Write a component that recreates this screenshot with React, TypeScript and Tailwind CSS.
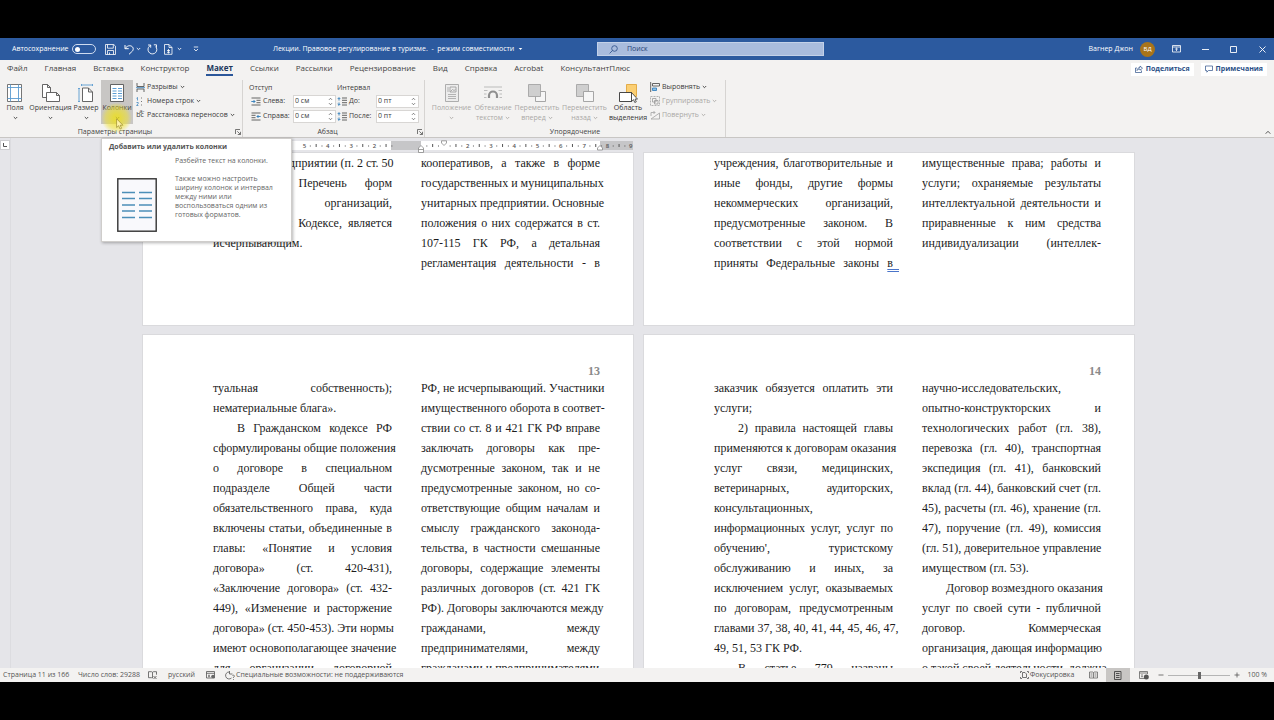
import React from "react";

type Kids = { children?: React.ReactNode };

function Svg({ w, h, children, className = "" }: Kids & { w: number; h: number; className?: string }) {
  return (
    <svg width={w} height={h} viewBox={`0 0 ${w} ${h}`} fill="none" className={`shrink-0 ${className}`} aria-hidden="true">
      {children}
    </svg>
  );
}

function Chevron() {
  return (
    <Svg w={5} h={4}>
      <path d="M.8 1l1.7 1.7L4.2 1" stroke="currentColor" strokeWidth=".9" />
    </Svg>
  );
}

/* ---------- Title bar ---------- */

function TitleBar() {
  return (
    <header className="flex h-[22px] shrink-0 items-center bg-[#2c5a9f] text-[7px] text-white">
      <div className="flex w-[273px] shrink-0 items-center pl-3">
        <label htmlFor="autosave" className="w-[60px]">Автосохранение</label>
        <button id="autosave" role="switch" aria-checked="false" aria-label="Автосохранение" className="flex h-[10px] w-6 items-center rounded-full border border-[#cfdcf0] px-[2px]">
          <span className="h-[5px] w-[5px] rounded-full bg-white" />
        </button>
        <button aria-label="Сохранить" className="ml-[9px]">
          <Svg w={11} h={11}>
            <path d="M.5.5h8.3l1.7 1.7v8.3H.5zM2.5.5v3.7h5.8V.5M2.5 10.500V6.500h6v4M4.500 8.500v2" stroke="#fff" strokeWidth=".8" />
          </Svg>
        </button>
        <button aria-label="Отменить" className="ml-2 flex items-center gap-[2px]">
          <Svg w={10} h={11}>
            <path d="M1 1v3.700h3.700M1.200 4.500C3 1.700 6 1 8 2.500s1.300 4-.3 5.300L5 10.300" stroke="#fff" strokeWidth="1" />
          </Svg>
          <Chevron />
        </button>
        <button aria-label="Повторить" className="ml-[6px]">
          <Svg w={11} h={11}>
            <path d="M6.800.8h2.700v2.700M1 1h2.700v2.700M3.500 1.500C1.600 2.400.7 4.300 1.100 6.400c.5 2.200 2.400 3.700 4.700 3.500 2.200-.2 4-2 4-4.300 0-1.200-.4-2.200-1.200-3" stroke="#fff" strokeWidth=".9" />
          </Svg>
        </button>
        <button aria-label="Создать" className="ml-[6px] flex items-center gap-1">
          <Svg w={9} h={11}>
            <path d="M.500.500h4.500L8 3.500v6.800H.500zM5 .500v3h3" stroke="#fff" strokeWidth=".8" />
            <path d="M3 6.500h3M3 8.300h3M4.500 5v4.500" stroke="#fff" strokeWidth=".8" />
          </Svg>
          <Chevron />
        </button>
        <button aria-label="Настройка панели" className="ml-[11px]">
          <Svg w={6} h={6}>
            <path d="M.8 1h4.400M1 3l2 2 2-2" stroke="#fff" strokeWidth=".8" />
          </Svg>
        </button>
      </div>
      <button className="flex w-[251px] items-center">
        <span className="whitespace-pre">Лекции. Правовое регулирование в туризме.  -  режим совместимости</span>
        <Svg w={5} h={4} className="ml-1"><path d="M.7 1h3.600L2.500 3z" fill="#fff" /></Svg>
      </button>
      <div className="flex flex-1 items-center pl-[73px]">
        <div className="flex h-[14px] w-[227px] items-center border border-[#c3d1e8] bg-[#a9bcdd] pl-[11px] text-[#1f3f75]">
          <Svg w={9} h={9}>
            <circle cx="5.500" cy="3.500" r="2.800" stroke="#2a4d86" strokeWidth=".8" />
            <path d="M3.500 5.500L.6 8.400" stroke="#2a4d86" strokeWidth=".8" />
          </Svg>
          <input aria-label="Поиск" placeholder="Поиск" className="ml-[9px] w-full bg-transparent outline-none placeholder:text-[#1f3f75]" />
        </div>
        <div className="ml-auto flex items-center whitespace-nowrap">
          <span>Вагнер Джон</span>
          <span className="ml-[7px] flex h-[15px] w-[15px] items-center justify-center rounded-full bg-[#a8741a] text-[6px]">ВД</span>
          <button aria-label="Параметры ленты" className="ml-[17px]">
            <Svg w={9} h={8}>
              <path d="M.5.5h8v6.500h-8zM.5 2h8M4.500 6V3.300M3.200 4.300l1.300-1.200 1.300 1.200" stroke="#fff" strokeWidth=".8" />
            </Svg>
          </button>
          <button aria-label="Свернуть" className="ml-[21px]">
            <Svg w={7} h={7}><path d="M0 3.500h7" stroke="#fff" strokeWidth=".9" /></Svg>
          </button>
          <button aria-label="Развернуть" className="ml-[21px]">
            <Svg w={7} h={7}><path d="M.5.5h6v6h-6z" stroke="#fff" strokeWidth=".9" /></Svg>
          </button>
          <button aria-label="Закрыть" className="mr-2 ml-[22px]">
            <Svg w={7} h={7}><path d="M.5.5l6 6M6.500.5l-6 6" stroke="#fff" strokeWidth=".9" /></Svg>
          </button>
        </div>
      </div>
    </header>
  );
}

/* ---------- Tabs ---------- */

const tabs = ["Файл", "Главная", "Вставка", "Конструктор", "Макет", "Ссылки", "Рассылки", "Рецензирование", "Вид", "Справка", "Acrobat", "КонсультантПлюс"];

function Tabs() {
  return (
    <nav className="flex h-[18px] shrink-0 items-center gap-[17px] px-[7px] text-[8px] text-[#444]">
      {tabs.map((t) => (
        <a key={t} href="#" className={t === "Макет" ? "border-b-2 border-[#2b579a] leading-3 font-bold text-[#20365a]" : "border-b-2 border-transparent leading-3"}>
          {t}
        </a>
      ))}
      <div className="ml-auto flex items-center gap-[7px] text-[7px] font-bold text-[#2b4f86]">
        <button className="flex h-[13px] items-center gap-[3px] bg-white px-1">
          <Svg w={8} h={8}>
            <path d="M2 3H.5v4.500h6V5.500M2 5.500C2.300 3.500 3.500 2.500 5 2.500V1l2.500 2.200L5 5.200V4C3.700 4 2.700 4.500 2 5.500z" stroke="#2b4f86" strokeWidth=".7" />
          </Svg>
          Поделиться
        </button>
        <button className="flex h-[13px] items-center gap-[3px] bg-white px-1">
          <Svg w={8} h={8}><path d="M.5 1h7v4.500H3.500L1.800 7.200V5.500H.5z" stroke="#2b4f86" strokeWidth=".7" /></Svg>
          Примечания
        </button>
      </div>
    </nav>
  );
}

/* ---------- Ribbon ---------- */

function Launcher() {
  return (
    <button aria-label="Дополнительные параметры" className="absolute right-[1px] bottom-[2px]">
      <Svg w={6} h={6}><path d="M.5 5V.5H5M2.300 2.300l3 3M5.500 2.800v2.700H2.800" stroke="#555" strokeWidth=".8" /></Svg>
    </button>
  );
}

function Group({ title, launcher, className, children }: Kids & { title: string; launcher?: boolean; className: string }) {
  return (
    <section className={`relative flex flex-col ${className}`}>
      <div className="flex flex-1 items-start">{children}</div>
      <h2 className={`pb-[1px] text-center text-[7px] leading-[9px] text-[#444] ${launcher ? "pr-3" : ""}`}>{title}</h2>
      {launcher && <Launcher />}
    </section>
  );
}

function BigButton({ lines, icon, arrow, className = "", children }: Kids & { lines: string[]; icon: React.ReactNode; arrow?: boolean; className?: string }) {
  const last = lines.length - 1;
  return (
    <button className={`relative flex h-[44px] shrink-0 flex-col items-center pt-[3px] text-[7px] leading-[10px] whitespace-nowrap ${className}`}>
      <span className="flex h-5 items-center">{icon}</span>
      {lines.map((l, i) => (
        <span key={l} className="flex items-center gap-[2px]">
          {l}
          {arrow && i === last && last > 0 && <Chevron />}
        </span>
      ))}
      {arrow && last === 0 && <span className="flex h-[10px] items-center"><Chevron /></span>}
      {children}
    </button>
  );
}

function SmallButton({ icon, disabled, children }: Kids & { icon: React.ReactNode; disabled?: boolean }) {
  return (
    <button className={`flex h-[14px] items-center text-[7px] whitespace-nowrap ${disabled ? "text-[#aaa8a6]" : "text-[#3b3b3b]"}`}>
      <span className="mr-[2px] flex w-[10px] justify-center">{icon}</span>
      {children}
      <span className="ml-[2px]"><Chevron /></span>
    </button>
  );
}

function Field({ id, label, value, icon, labelWidth }: { id: string; label: string; value: string; icon: React.ReactNode; labelWidth: string }) {
  return (
    <div className="flex h-[15px] items-center text-[7px] text-[#3b3b3b]">
      {icon}
      <label htmlFor={id} className={`ml-[2px] ${labelWidth}`}>{label}</label>
      <div className="flex h-[13px] w-[43px] items-center border border-[#d8d6d4] bg-white pr-[2px]">
        <input id={id} defaultValue={value} className="w-full min-w-0 bg-transparent pl-[1px] outline-none" />
        <Svg w={5} h={9}><path d="M1 2.800l1.500-1.500L4 2.800M1 6.200l1.500 1.500L4 6.200" stroke="#555" strokeWidth=".8" /></Svg>
      </div>
    </div>
  );
}

function IndentIcon({ flip }: { flip?: boolean }) {
  return (
    <Svg w={10} h={9}>
      <path d={flip ? "M.5 1h9M.5 3.300h4M.5 5.700h4M.5 8h9" : "M.5 1h9M5.500 3.300h4M5.500 5.700h4M.5 8h9"} stroke="#555" strokeWidth=".9" />
      <path d={flip ? "M9.700 4.500H6M7.500 3L6 4.500 7.500 6" : "M.3 4.500h3.700M2.500 3L4 4.500 2.500 6"} stroke="#2a79b8" strokeWidth=".9" />
    </Svg>
  );
}

function SpacingIcon() {
  return (
    <Svg w={10} h={9}>
      <path d="M5 1h5M5 3.300h5M5 5.700h5M5 8h5" stroke="#555" strokeWidth=".9" />
      <path d="M2 .8v2.700M.7 2L2 .7 3.300 2M2 8.200V5.500M.7 7L2 8.300 3.300 7" stroke="#2a79b8" strokeWidth=".9" />
    </Svg>
  );
}

function ColumnsTooltip() {
  return (
    <div role="tooltip" className="absolute top-[58px] left-0 z-20 w-[191px] border border-[#cfcdcb] bg-white px-[7px] pt-[3px] pb-[9px] text-left text-[7px] leading-[9px] whitespace-normal text-[#666] shadow-[1px_1px_3px_rgba(0,0,0,0.3)]">
      <strong className="block leading-[10px] text-[#555]">Добавить или удалить колонки</strong>
      <div className="mt-1 flex">
        <Svg w={40} h={54} className="mt-[22px] ml-2">
          <rect x=".8" y=".8" width="38.400" height="52.400" fill="#f9f9fc" stroke="#333" strokeWidth="1.400" />
          <path d="M5 14.500h13M22 14.500h13M5 20.500h13M22 20.500h13M5 27h13M22 27h13M5 33h13M22 33h13M5 39.500h13M22 39.500h13" stroke="#4c8fb8" strokeWidth="1.400" />
        </Svg>
        <div className="ml-[18px] flex-1">
          <p>Разбейте текст на колонки.</p>
          <p className="mt-[9px] whitespace-nowrap">
            Также можно настроить<br />ширину колонок и интервал<br />между ними или<br />воспользоваться одним из<br />готовых форматов.
          </p>
        </div>
      </div>
    </div>
  );
}

function Ribbon() {
  const grey = "text-[#aaa8a6]";
  return (
    <div className="relative flex h-[60px] shrink-0 border-b border-[#c8c6c4] pt-[2px] text-[#3b3b3b]">
      <Group title="Параметры страницы" launcher className="w-[243px] border-r border-[#d6d4d2]">
        <BigButton lines={["Поля"]} arrow className="w-[30px]" icon={
          <Svg w={16} h={18}>
            <path d="M.5.5h14v17H.5z" fill="#fff" stroke="#666" strokeWidth=".9" />
            <path d="M3.500.5v17M11.500.5v17M.5 3.500h14M.5 14.500h14" stroke="#5a9bd0" strokeWidth=".9" />
          </Svg>} />
        <BigButton lines={["Ориентация"]} arrow className="w-[41px]" icon={
          <Svg w={18} h={18}>
            <path d="M.5.5h5l3 3v10h-8zM5.500.5v3h3" fill="#fff" stroke="#555" strokeWidth=".9" />
            <path d="M4.500 8.500h10l3 3v6h-13zM14.500 8.500v3h3" fill="#fff" stroke="#555" strokeWidth=".9" />
          </Svg>} />
        <BigButton lines={["Размер"]} arrow className="w-[30px]" icon={
          <Svg w={16} h={18}>
            <path d="M3.500 1h11M1 4.500v13M3.500 0v2M14.500 0v2M0 4.500h2M0 17.500h2" stroke="#5a9bd0" strokeWidth=".9" />
            <path d="M4.500 4h6l4 4v9.500h-10zM10.500 4v4h4" fill="#fff" stroke="#555" strokeWidth=".9" />
          </Svg>} />
        <div className="relative">
          <BigButton lines={["Колонки"]} arrow className="w-8 bg-[#c8c6c4]" icon={
            <Svg w={15} h={18}>
              <path d="M.5.5h13v17H.5z" fill="#fff" stroke="#555" strokeWidth=".9" />
              <path d="M2.500 4.500h4M8 4.500h4M2.500 7h4M8 7h4M2.500 9.500h4M8 9.500h4M2.500 12h4M8 12h4M2.500 14.500h4M8 14.500h4" stroke="#4a93cf" strokeWidth=".9" />
            </Svg>}>
            <span className="pointer-events-none absolute top-[23px] left-0 h-[30px] w-[31px] rounded-full bg-[radial-gradient(circle,rgba(240,225,20,0.75)_15%,rgba(240,225,40,0.5)_50%,rgba(240,225,60,0)_72%)]" />
            <Svg w={8} h={12} className="absolute top-[38px] left-[15px] z-30">
              <path d="M.6.8v8.700l2-1.800 1.500 3.300 1.500-.7-1.500-3.100h2.800z" fill="#fff3a8" stroke="#8a7a20" strokeWidth=".6" />
            </Svg>
          </BigButton>
          <ColumnsTooltip />
        </div>
        <div className="ml-[2px]">
          <SmallButton icon={<Svg w={9} h={9}><path d="M1 0v3.500h7V0M1 9V6h7v3" stroke="#555" strokeWidth=".9" /><path d="M0 4.700h9" stroke="#2a79b8" strokeWidth=".8" /></Svg>}>Разрывы</SmallButton>
          <SmallButton icon={<Svg w={9} h={9}><path d="M.5 1.300L1.500.5v3M.5 5.500h1.700v1L.6 8.500h1.800" stroke="#2a79b8" strokeWidth=".7" /><path d="M5 1h1M5 4.500h1M5 8h1" stroke="#777" strokeWidth="1" /></Svg>}>Номера строк</SmallButton>
          <SmallButton icon={
            <span className="relative text-[7px] leading-[10px]">
              bc
              <span className="absolute -top-[4px] left-[3px] text-[6px]">a-</span>
            </span>}>Расстановка переносов</SmallButton>
        </div>
      </Group>

      <Group title="Абзац" launcher className="w-[182px] border-r border-[#d6d4d2]">
        <div className="ml-2 w-[86px] pt-[1px]">
          <div className="-ml-[2px] text-[7px] leading-[13px]">Отступ</div>
          <Field id="left" label="Слева:" value="0 см" icon={<IndentIcon />} labelWidth="w-[30px]" />
          <Field id="right" label="Справа:" value="0 см" icon={<IndentIcon flip />} labelWidth="w-[30px]" />
        </div>
        <div className="pt-[1px]">
          <div className="text-[7px] leading-[13px]">Интервал</div>
          <Field id="before" label="До:" value="0 пт" icon={<SpacingIcon />} labelWidth="w-[27px]" />
          <Field id="after" label="После:" value="0 пт" icon={<SpacingIcon />} labelWidth="w-[27px]" />
        </div>
      </Group>

      <Group title="Упорядочение" className="w-[301px] border-r border-[#d6d4d2]">
        <BigButton lines={["Положение"]} arrow className={`ml-[5px] w-[43px] ${grey}`} icon={
          <Svg w={14} h={18}>
            <path d="M.5.5h13v17H.5z" fill="#ececec" stroke="#a5a5a5" strokeWidth=".9" />
            <path d="M5 3h6v5H5zM5.500 7.500l2-2 1.500 1 1.500-1" stroke="#999" strokeWidth=".8" />
            <path d="M3 3v5M3 10.500h8M3 12.500h8M3 14.500h8" stroke="#a5a5a5" strokeWidth=".8" />
          </Svg>} />
        <BigButton lines={["Обтекание", "текстом"]} arrow className={`w-[40px] ${grey}`} icon={
          <Svg w={18} h={14}>
            <path d="M0 1h18M0 4.500h3.500M14.500 4.500H18M0 8h2.500M15.500 8H18M0 11.500h2.500M15.500 11.500H18" stroke="#b5b5b5" strokeWidth=".9" />
            <path d="M5 12V9.500a4 4 0 018 0V12" stroke="#8f8f8f" strokeWidth="2.200" />
          </Svg>} />
        <BigButton lines={["Переместить", "вперед"]} arrow className={`w-[48px] ${grey}`} icon={
          <Svg w={18} h={18}>
            <path d="M7.500 7.500h10v10h-10z" fill="#f6f6f6" stroke="#9d9d9d" strokeWidth=".9" />
            <path d="M.5.5h12v12H.5z" fill="#cfcfcf" stroke="#a5a5a5" strokeWidth=".9" />
          </Svg>} />
        <BigButton lines={["Переместить", "назад"]} arrow className={`w-[47px] ${grey}`} icon={
          <Svg w={18} h={18}>
            <path d="M.5.5h12v12H.5z" fill="#cfcfcf" stroke="#a5a5a5" strokeWidth=".9" />
            <path d="M7.500 7.500h10v10h-10z" fill="#f6f6f6" stroke="#9d9d9d" strokeWidth=".9" />
          </Svg>} />
        <BigButton lines={["Область", "выделения"]} className="w-[40px] text-[#333]" icon={
          <Svg w={19} h={19}>
            <path d="M7.500.5h10v12h-10z" fill="#fbcf73" stroke="#e0a63d" strokeWidth=".9" />
            <path d="M.5 8.500h12v9H.5z" fill="#fff" stroke="#333" strokeWidth=".9" />
            <path d="M12.500 8.500v9l2-1.800 1.300 2.800 1.500-.7-1.300-2.700h2.500z" fill="#fff" stroke="#333" strokeWidth=".8" />
          </Svg>} />
        <div className="ml-[2px]">
          <SmallButton icon={<Svg w={10} h={10}><path d="M.7 0v10" stroke="#555" strokeWidth=".9" /><path d="M2.500 1.500h7v2.500h-7z" stroke="#555" strokeWidth=".9" /><path d="M2.500 6h4v2.500h-4z" fill="#8cc0e8" stroke="#2a79b8" strokeWidth=".8" /></Svg>}>Выровнять</SmallButton>
          <SmallButton disabled icon={<Svg w={10} h={10}><path d="M.5.5h9v9h-9z" stroke="#aaa" strokeWidth=".9" strokeDasharray="2 1" /><path d="M2.500 2.500h3.500v3.500H2.500zM4.500 4.500H8V8H4.500z" stroke="#999" strokeWidth=".8" /></Svg>}>Группировать</SmallButton>
          <SmallButton disabled icon={<Svg w={10} h={10}><path d="M1 9h8.500V3zM1 6V2.500h4M3.500 1L5 2.500 3.500 4" stroke="#aaa" strokeWidth=".9" /></Svg>}>Повернуть</SmallButton>
        </div>
      </Group>
      <button aria-label="Свернуть ленту" className="absolute right-[3px] bottom-[2px]">
        <Svg w={6} h={5}><path d="M.7 3.700L3 1.300l2.300 2.400" stroke="#444" strokeWidth=".9" /></Svg>
      </button>
    </div>
  );
}

/* ---------- Document ---------- */

function Ruler() {
  const zero = 278;
  const step = 23.3;
  const marks = Array.from({ length: 15 }, (_, i) => i - 5);
  return (
    <svg width="490" height="13" viewBox="0 0 490 13" className="absolute top-[2px] left-0" aria-hidden="true">
      <rect x="0" y="1" width="490" height="9" fill="#fff" />
      <rect x="248" y="1" width="30" height="9" fill="#c6c6c8" />
      <rect x="457" y="1" width="33" height="9" fill="#c6c6c8" />
      {marks.map((m) => (
        <g key={m} fill="#555">
          {m !== 0 && m !== 1 && m !== -1 && (
            <text x={zero + m * step} y="8" fontSize="6" fontWeight="600" textAnchor="middle">{Math.abs(m)}</text>
          )}
          {m !== -1 && m !== 9 && (
            <>
              <rect x={zero + (m + 0.25) * step - 0.5} y="5.500" width="1" height="1" />
              <rect x={zero + (m + 0.5) * step - 0.5} y="4" width="1" height="3" />
              <rect x={zero + (m + 0.75) * step - 0.5} y="5.500" width="1" height="1" />
            </>
          )}
        </g>
      ))}
      <path d="M298.500.800h5v2.200l-2.500 2.500-2.500-2.500z" fill="#fff" stroke="#888" strokeWidth=".8" />
      <path d="M275.500 12.500h5V8L278 5.500 275.500 8zM275.500 9.500h5" fill="#fff" stroke="#888" strokeWidth=".8" />
      <path d="M454.500 10h5V8L457 5.500 454.500 8z" fill="#fff" stroke="#888" strokeWidth=".8" />
    </svg>
  );
}

/* A leading ">" marks a first-line indent, a trailing "|" the last line of a paragraph. */
function Column({ lines, children }: Kids & { lines: string[] }) {
  return (
    <div className="w-[179px] text-[12px] leading-5 text-[#1c1c1c]">
      {lines.map((l, i) => {
        const indent = l.startsWith(">");
        const end = l.endsWith("|");
        return (
          <p key={i} className={`whitespace-nowrap ${indent ? "pl-6" : ""} ${end ? "text-left" : "[text-align-last:justify]"}`}>
            {l.replace(">", "").replace("|", "")}
          </p>
        );
      })}
      {children}
    </div>
  );
}

function Page({ number, left, right, leftEnd, className = "" }: { number?: string; left: string[]; right: string[]; leftEnd?: React.ReactNode; className?: string }) {
  return (
    <article className={`w-[490px] shrink-0 bg-white pr-[33px] pl-[70px] font-['Liberation_Serif',serif] ring-1 ring-[#dadadd] ${className}`}>
      {number && <div className="text-right text-[12px] leading-[14px] font-bold text-[#8a8a8a]">{number}</div>}
      <div className="flex gap-[29px]">
        <Column lines={left}>{leftEnd}</Column>
        <Column lines={right} />
      </div>
    </article>
  );
}

const p11l = ["унитарные предприятии (п. 2 ст. 50", "имуществом. Перечень форм", "коммерческих организаций,", "в Гражданском Кодексе, является", "исчерпывающим.|"];
const p11r = ["кооперативов, а также в форме", "государственных и муниципальных", "унитарных предприятии. Основные", "положения о них содержатся в ст.", "107-115 ГК РФ, а детальная", "регламентация деятельности - в"];
const p12l = ["учреждения, благотворительные и", "иные фонды, другие формы", "некоммерческих организаций,", "предусмотренные законом. В", "соответствии с этой нормой"];
const p12r = ["имущественные права; работы и", "услуги; охраняемые результаты", "интеллектуальной деятельности и", "приравненные к ним средства", "индивидуализации (интеллек-"];
const p13l = ["туальная собственность);", "нематериальные блага».|", ">В Гражданском кодексе РФ", "сформулированы общие положения", "о договоре в специальном", "подразделе Общей части", "обязательственного права, куда", "включены статьи, объединенные в", "главы: «Понятие и условия", "договора» (ст. 420-431),", "«Заключение договора» (ст. 432-", "449), «Изменение и расторжение", "договора» (ст. 450-453). Эти нормы", "имеют основополагающее значение", "для организации договорной"];
const p13r = ["РФ, не исчерпывающий. Участники", "имущественного оборота в соответ-", "ствии со ст. 8 и 421 ГК РФ вправе", "заключать договоры как пре-", "дусмотренные законом, так и не", "предусмотренные законом, но со-", "ответствующие общим началам и", "смыслу гражданского законода-", "тельства, в частности смешанные", "договоры, содержащие элементы", "различных договоров (ст. 421 ГК", "РФ). Договоры заключаются между", "гражданами, между", "предпринимателями, между", "гражданами и предпринимателями,"];
const p14l = ["заказчик обязуется оплатить эти", "услуги;|", ">2) правила настоящей главы", "применяются к договорам оказания", "услуг связи, медицинских,", "ветеринарных, аудиторских,", "консультационных,|", "информационных услуг, услуг по", "обучению', туристскому", "обслуживанию и иных, за", "исключением услуг, оказываемых", "по договорам, предусмотренным", "главами 37, 38, 40, 41, 44, 45, 46, 47,", "49, 51, 53 ГК РФ.|", ">В статье 779 названы"];
const p14r = ["научно-исследовательских,|", "опытно-конструкторских и", "технологических работ (гл. 38),", "перевозка (гл. 40), транспортная", "экспедиция (гл. 41), банковский", "вклад (гл. 44), банковский счет (гл.", "45), расчеты (гл. 46), хранение (гл.", "47), поручение (гл. 49), комиссия", "(гл. 51), доверительное управление", "имуществом (гл. 53).|", ">Договор возмездного оказания", "услуг по своей сути - публичной", "договор. Коммерческая", "организация, дающая информацию", "о такой своей деятельности, должна"];

function Document() {
  return (
    <main className="flex min-h-0 flex-1 overflow-hidden bg-[#e5e5e9]">
      <div className="w-[11px] shrink-0 border-r border-[#dcdce0]">
        <div className="mt-[2px] flex h-[10px] w-[10px] items-center justify-center border border-[#cfcfd2] bg-white">
          <Svg w={4} h={4}><path d="M.5 0v3.500H4" stroke="#555" /></Svg>
        </div>
      </div>
      <div className="flex flex-1 justify-center">
        <div className="relative flex flex-col gap-[10px] pt-[15px]">
          <Ruler />
          <div className="flex h-[172px] shrink-0 gap-[11px]">
            <Page left={p11l} right={p11r} />
            <Page
              left={p12l}
              right={p12r}
              leftEnd={
                <p className="-mr-[6px] flex justify-between">
                  <span>приняты</span>
                  <span>Федеральные</span>
                  <span>законы</span>
                  <span className="whitespace-pre underline decoration-[#4a74c9] decoration-double underline-offset-2">в  </span>
                </p>
              }
            />
          </div>
          <div className="flex shrink-0 gap-[11px]">
            <Page number="13" className="pt-[29px] pb-20" left={p13l} right={p13r} />
            <Page number="14" className="pt-[29px] pb-20" left={p14l} right={p14r} />
          </div>
        </div>
      </div>
      <div className="w-2 shrink-0" />
    </main>
  );
}

/* ---------- Status bar ---------- */

function StatusBar() {
  return (
    <footer className="flex h-[14px] shrink-0 items-center bg-[#f3f2f1] pr-[7px] pl-[3px] text-[7px] whitespace-nowrap text-[#555]">
      <span className="w-[75px]">Страница 11 из 166</span>
      <span className="w-[70px]">Число слов: 29288</span>
      <Svg w={9} h={8}><path d="M4.500 7V1.300L3.500.7H.5v6h3zM4.500 1.300l1-.6h3v3M5.500 5l3 3M8.500 5l-3 3" stroke="#555" strokeWidth=".8" /></Svg>
      <span className="ml-[11px] w-[38px]">русский</span>
      <Svg w={10} h={8}><path d="M.5.5h8v6.500h-8zM.5 2.300h8M2 4.300h2M2 5.700h2" stroke="#555" strokeWidth=".8" /><circle cx="7" cy="5.500" r="1.800" fill="#666" /></Svg>
      <Svg w={11} h={9} className="ml-[9px]"><path d="M4.500 1a3.500 3.500 0 102 6M4.500 0v3h3M7.500 4.500c2-1 2.500.8 1 1.700v.800M8.500 8v.8" stroke="#555" strokeWidth=".8" /></Svg>
      <span>Специальные возможности: не поддерживаются</span>
      <div className="ml-auto flex h-full items-center">
        <button className="flex items-center gap-[1px]">
          <Svg w={9} h={8}><path d="M2.500 1.500h2.500l1.500 1.500v3.500h-4zM2 .5H.5V2M7 .5h1.500V2M2 7.500H.5V6M7 7.500h1.500V6" stroke="#555" strokeWidth=".8" /></Svg>
          Фокусировка
        </button>
        <button aria-label="Режим чтения" className="flex h-full w-8 items-center justify-center pl-[6px]">
          <Svg w={9} h={8}><path d="M.5 1h3.500l.5.500.5-.500h3.500v6H.5zM4.500 1.500V7M1.500 3h2M1.500 5h2M5.500 3h2M5.500 5h2" stroke="#666" strokeWidth=".8" /></Svg>
        </button>
        <button aria-label="Разметка страницы" className="flex h-full w-6 items-center justify-center bg-[#c8c6c4]">
          <Svg w={8} h={9}><path d="M.5.5h6.500v8H.5zM2 2.500h3.500M2 4.500h3.500M2 6.500h3.500" stroke="#444" strokeWidth=".9" /></Svg>
        </button>
        <button aria-label="Веб-документ" className="flex h-full w-[27px] items-center justify-center">
          <Svg w={10} h={9}><path d="M6 7.500H.5v-7h8V3M.5 2h8M2 4h2M2 5.700h2" stroke="#666" strokeWidth=".8" /><circle cx="7.300" cy="6" r="2.500" fill="#555" /></Svg>
        </button>
        <button aria-label="Уменьшить" className="ml-[1px]"><Svg w={6} h={6}><path d="M.5 3h5" stroke="#555" strokeWidth=".8" /></Svg></button>
        <input
          type="range"
          aria-label="Масштаб"
          defaultValue={50}
          className="mx-1 h-2 w-[62px] appearance-none bg-[linear-gradient(#b5b5b5,#b5b5b5)] bg-[length:100%_1px] bg-center bg-no-repeat [&::-webkit-slider-thumb]:h-[7px] [&::-webkit-slider-thumb]:w-[3px] [&::-webkit-slider-thumb]:appearance-none [&::-webkit-slider-thumb]:bg-[#666]"
        />
        <button aria-label="Увеличить" className="mr-[7px]"><Svg w={6} h={6}><path d="M.5 3h5M3 .5v5" stroke="#555" strokeWidth=".8" /></Svg></button>
        <span>100 %</span>
      </div>
    </footer>
  );
}

export default function App() {
  return (
    <div className="flex h-screen flex-col overflow-hidden bg-black py-[38px] font-['Open_Sans','Noto_Sans',sans-serif]">
      <div className="flex min-h-0 flex-1 flex-col bg-[#f3f2f1]">
        <TitleBar />
        <Tabs />
        <Ribbon />
        <Document />
        <StatusBar />
      </div>
    </div>
  );
}
